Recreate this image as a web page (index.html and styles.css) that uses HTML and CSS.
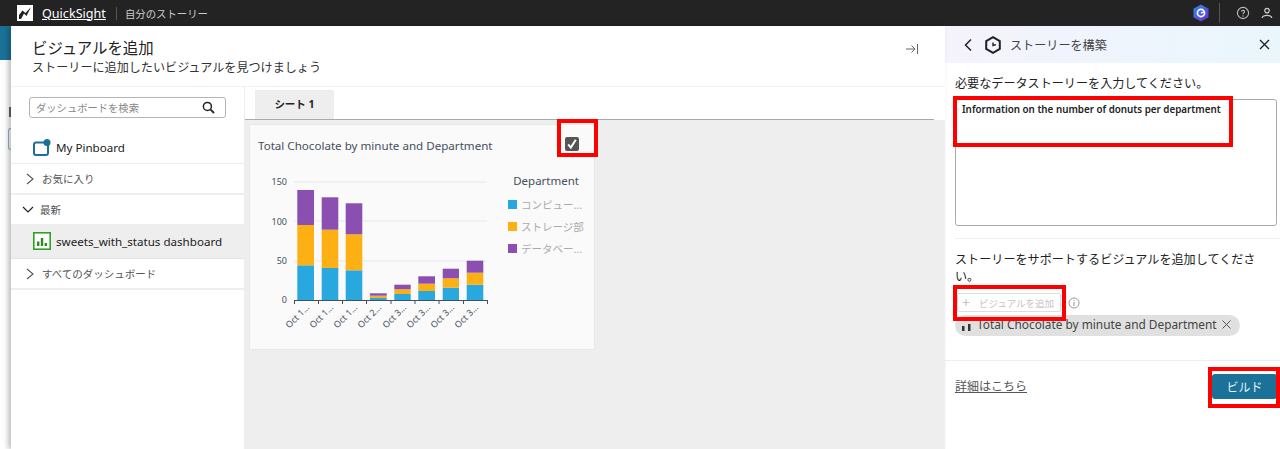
FILE: index.html
```html
<!DOCTYPE html>
<html lang="ja">
<head>
  <meta charset="UTF-8" />
  <title>QuickSight</title>
  <link rel="stylesheet" href="styles.css">
</head>
<body>

  <!-- Top bar -->
  <header class="topbar">
    <svg class="logo" width="16" height="16" viewBox="0 0 16 16"><rect width="16" height="16" fill="#fff"/><path d="M2 14V10L5.5 5.5 8.5 8 14 2 9.5 11 7 8.5 4 14Z" fill="#232323"/></svg>
    <a class="brand">QuickSight</a>
    <span class="topbar-sep"></span>
    <span class="topbar-title">自分のストーリー</span>
    <svg class="q-icon" width="16" height="18" viewBox="0 0 16 18">
      <defs><linearGradient id="qgrad" x1="0" y1="0" x2="1" y2="1"><stop offset="0" stop-color="#2f8cf0"/><stop offset="1" stop-color="#6a2fd0"/></linearGradient></defs>
      <path d="M8 .5 15.5 4.7V13.3L8 17.5.5 13.3V4.7Z" fill="url(#qgrad)"/>
      <circle cx="8" cy="9" r="3.6" fill="none" stroke="#fff" stroke-width="1.6"/><path d="M8 9 11 8" stroke="#fff" stroke-width="1.4"/>
    </svg>
    <span class="topbar-sep right-sep"></span>
    <svg class="top-icon" width="14" height="14" viewBox="0 0 14 14"><circle cx="7" cy="7" r="5.6" fill="none" stroke="#bbb" stroke-width="1.1"/><path d="M5.4 5.6C5.4 4 8.6 4 8.6 5.6 8.6 6.8 7 6.7 7 8.2" fill="none" stroke="#bbb" stroke-width="1.1"/><circle cx="7" cy="10" r=".7" fill="#bbb"/></svg>
    <svg class="top-icon user-icon" width="12" height="12" viewBox="0 0 12 12"><circle cx="6" cy="3.6" r="2.3" fill="none" stroke="#ccc" stroke-width="1.2"/><path d="M1.2 11C1.2 7.4 10.8 7.4 10.8 11" fill="none" stroke="#ccc" stroke-width="1.2"/></svg>
  </header>

  <div class="page">
    <!-- what is left visible of the page behind the dialog -->
    <div class="behind">
      <div class="behind-teal"></div>
      <div class="behind-mark"></div>
      <div class="behind-box"></div>
    </div>

    <!-- Add visual dialog -->
    <section class="dialog">
      <div class="dialog-head">
        <div>
          <h1>ビジュアルを追加</h1>
          <p>ストーリーに追加したいビジュアルを見つけましょう</p>
        </div>
        <svg class="collapse" width="14" height="12" viewBox="0 0 14 12"><path d="M1 6H10M6.5 2.5 10 6 6.5 9.5M12.5 1V11" fill="none" stroke="#666" stroke-width="1"/></svg>
      </div>
      <div class="dialog-body">
        <aside class="sidebar">
          <div class="search">
            <span>ダッシュボードを検索</span>
            <svg width="13" height="13" viewBox="0 0 13 13"><circle cx="5.4" cy="5.4" r="4" fill="none" stroke="#222" stroke-width="1.5"/><path d="M8.4 8.4 12 12" stroke="#222" stroke-width="1.8"/></svg>
          </div>
          <div class="pinboard">
            <svg width="18" height="18" viewBox="0 0 18 18"><rect x="1" y="3.5" width="14" height="12.5" rx="2" fill="none" stroke="#1b6f98" stroke-width="2"/><circle cx="14" cy="3.5" r="3.5" fill="#1b6f98"/></svg>
            <span>My Pinboard</span>
          </div>
          <div class="group">
            <svg class="chev" width="10" height="12" viewBox="0 0 10 12"><path d="M2 1 8 6 2 11" fill="none" stroke="#555" stroke-width="1.1"/></svg>
            <span>お気に入り</span>
          </div>
          <div class="group group-open">
            <svg class="chev" width="12" height="10" viewBox="0 0 12 10"><path d="M1 2 6 7 11 2" fill="none" stroke="#222" stroke-width="1.2"/></svg>
            <span>最新</span>
          </div>
          <div class="dash-item">
            <svg width="18" height="18" viewBox="0 0 18 18"><rect x=".8" y=".8" width="16.4" height="16.4" fill="#fff" stroke="#2ea31f" stroke-width="1.6"/><path d="M4 9.5H6.4V14H4ZM7.8 6H10.2V14H7.8ZM11.6 11H14V14H11.6Z" fill="#2e8a22"/></svg>
            <span>sweets_with_status dashboard</span>
          </div>
          <div class="group">
            <svg class="chev" width="10" height="12" viewBox="0 0 10 12"><path d="M2 1 8 6 2 11" fill="none" stroke="#555" stroke-width="1.1"/></svg>
            <span>すべてのダッシュボード</span>
          </div>
        </aside>

        <div class="sheet">
          <div class="tabs"><div class="tab">シート 1</div></div>
          <div class="sheet-area">
            <article class="card">
              <div class="card-head">
                <h2>Total Chocolate by minute and Department</h2>
                <span class="check">
                  <svg width="14" height="14" viewBox="0 0 14 14"><rect width="14" height="14" rx="2" fill="#555"/><path d="M3.2 7.4 5.8 10.6 10.8 2.8" fill="none" stroke="#fff" stroke-width="2"/></svg>
                </span>
              </div>
              <div class="chart-row">
                <svg class="chart" width="248" height="190" viewBox="0 0 248 190">
                  <g class="grid">
                    <path d="M44 38H237M44 77H237M44 117H237"/>
                  </g>
                  <g class="y-labels">
                    <text x="37" y="41">150</text>
                    <text x="37" y="81">100</text>
                    <text x="37" y="120">50</text>
                    <text x="37" y="159">0</text>
                  </g>
                  <g fill="#29a8e0">
                    <rect x="47.3" y="121.3" width="16.7" height="34.7"/>
                    <rect x="71.7" y="124" width="16.6" height="32"/>
                    <rect x="95.7" y="126.3" width="16.6" height="29.7"/>
                    <rect x="120" y="154" width="16.7" height="2"/>
                    <rect x="144.3" y="150" width="16.4" height="6"/>
                    <rect x="168.3" y="147" width="16.7" height="9"/>
                    <rect x="192.7" y="143.7" width="16.3" height="12.3"/>
                    <rect x="216.7" y="140.7" width="16.6" height="15.3"/>
                  </g>
                  <g fill="#fdb014">
                    <rect x="47.3" y="81" width="16.7" height="40.3"/>
                    <rect x="71.7" y="85.7" width="16.6" height="38.3"/>
                    <rect x="95.7" y="90.3" width="16.6" height="36"/>
                    <rect x="120" y="151.7" width="16.7" height="2.3"/>
                    <rect x="144.3" y="145.3" width="16.4" height="4.7"/>
                    <rect x="168.3" y="139.7" width="16.7" height="7.3"/>
                    <rect x="192.7" y="134.3" width="16.3" height="9.4"/>
                    <rect x="216.7" y="128.7" width="16.6" height="12"/>
                  </g>
                  <g fill="#8a4fb0">
                    <rect x="47.3" y="46" width="16.7" height="35"/>
                    <rect x="71.7" y="53.3" width="16.6" height="32.4"/>
                    <rect x="95.7" y="59.3" width="16.6" height="31"/>
                    <rect x="120" y="149.3" width="16.7" height="2.4"/>
                    <rect x="144.3" y="140.7" width="16.4" height="4.6"/>
                    <rect x="168.3" y="132.3" width="16.7" height="7.4"/>
                    <rect x="192.7" y="124.7" width="16.3" height="9.6"/>
                    <rect x="216.7" y="116.7" width="16.6" height="12"/>
                  </g>
                  <path class="axis" d="M44 156.5H238M44.5 156V160M68.5 156V160M92.5 156V160M116.5 156V160M141 156V160M165 156V160M189 156V160M213.5 156V160M237.5 156V160"/>
                  <g class="x-labels">
                    <text transform="translate(60 164) rotate(-45)">Oct 1...</text>
                    <text transform="translate(84 164) rotate(-45)">Oct 1...</text>
                    <text transform="translate(108 164) rotate(-45)">Oct 1...</text>
                    <text transform="translate(132 164) rotate(-45)">Oct 2...</text>
                    <text transform="translate(157 164) rotate(-45)">Oct 3...</text>
                    <text transform="translate(181 164) rotate(-45)">Oct 3...</text>
                    <text transform="translate(205 164) rotate(-45)">Oct 3...</text>
                    <text transform="translate(229 164) rotate(-45)">Oct 3...</text>
                  </g>
                </svg>
                <div class="legend">
                  <div class="legend-title">Department</div>
                  <div class="legend-item"><i class="sw-blue"></i>コンピュー...</div>
                  <div class="legend-item"><i class="sw-orange"></i>ストレージ部</div>
                  <div class="legend-item"><i class="sw-purple"></i>データベー...</div>
                </div>
              </div>
              <span class="mark mark-check"></span>
            </article>
          </div>
        </div>
      </div>
    </section>

    <!-- Build story panel -->
    <section class="panel">
      <div class="panel-head">
        <svg width="10" height="14" viewBox="0 0 10 14"><path d="M8 1.5 2.5 7 8 12.5" fill="none" stroke="#222" stroke-width="1.5"/></svg>
        <svg class="panel-q" width="16" height="18" viewBox="0 0 16 18"><path d="M8 1.2 14.8 5.1V12.9L8 16.8 1.2 12.9V5.1Z" fill="none" stroke="#222" stroke-width="2"/><path d="M8 6.5V9.5L11 8.6" fill="none" stroke="#222" stroke-width="1.4"/></svg>
        <span class="panel-title">ストーリーを構築</span>
        <svg class="panel-close" width="11" height="11" viewBox="0 0 11 11"><path d="M1 1 10 10M10 1 1 10" stroke="#222" stroke-width="1.4"/></svg>
      </div>
      <div class="prompt">
        <label>必要なデータストーリーを入力してください。</label>
        <div class="textbox">Information on the number of donuts per department</div>
        <span class="mark mark-text"></span>
      </div>
      <div class="visuals">
        <label>ストーリーをサポートするビジュアルを追加してください。</label>
        <div class="add-row">
          <button class="add-btn"><span class="plus">+</span>ビジュアルを追加</button>
          <svg width="12" height="12" viewBox="0 0 12 12"><circle cx="6" cy="6" r="5" fill="none" stroke="#999"/><path d="M6 5V9M6 3V4" stroke="#999"/></svg>
          <span class="mark mark-add"></span>
        </div>
        <div class="chip">
          <svg class="chip-icon" width="10" height="8" viewBox="0 0 10 8"><path d="M0 3H2.5V8H0ZM6 1H8.5V8H6Z" fill="#333"/></svg>
          <span>Total Chocolate by minute and Department</span>
          <svg width="9" height="9" viewBox="0 0 9 9"><path d="M.5.5 8.5 8.5M8.5.5 .5 8.5" stroke="#555" stroke-width="1"/></svg>
        </div>
      </div>
      <div class="panel-foot">
        <a class="more">詳細はこちら</a>
        <button class="build">ビルド</button>
        <span class="mark mark-build"></span>
      </div>
    </section>
  </div>

</body>
</html>
```

FILE: styles.css
```css
html, body {
  margin: 0;
  padding: 0;
}

body {
  width: 1280px;
  height: 449px;
  overflow: hidden;
  display: flex;
  flex-direction: column;
  font-family: "Noto Sans", "Noto Sans CJK JP", sans-serif;
  color: #222;
  background: #fff;
}

h1, h2, p {
  margin: 0;
  font-weight: 400;
}

/* Top bar */
.topbar {
  height: 26px;
  flex: none;
  display: flex;
  align-items: center;
  background: #232323;
  color: #ddd;
}

.logo {
  margin-left: 17px;
}

.brand {
  margin-left: 9px;
  font-size: 12.6px;
  color: #fff;
  text-decoration: underline;
}

.topbar-sep {
  width: 1px;
  height: 13px;
  margin-left: 10px;
  background: #555;
}

.topbar-title {
  margin-left: 8px;
  font-size: 10.4px;
  color: #ccc;
}

.q-icon {
  margin-left: auto;
}

.right-sep {
  height: 20px;
  margin-left: 10px;
}

.top-icon {
  margin-left: 16px;
}

.user-icon {
  margin-left: 11px;
  margin-right: 7px;
}

/* Page */
.page {
  flex: 1;
  display: flex;
  min-height: 0;
}

.behind {
  width: 11px;
  flex: none;
  background: #fff;
}

.behind-teal {
  height: 34px;
  background: #1b7299;
}

.behind-mark {
  width: 2px;
  height: 10px;
  margin: 47px 0 0 9px;
  background: #666;
}

.behind-box {
  width: 3px;
  height: 20px;
  margin: 11px 0 0 8px;
  border: 1px solid #8fb6c9;
  border-right: 0;
  border-radius: 3px 0 0 3px;
}

/* Dialog */
.dialog {
  width: 934px;
  flex: none;
  display: flex;
  flex-direction: column;
  background: #fff;
  box-shadow: -3px 0 5px rgba(0, 0, 0, 0.25);
  z-index: 1;
}

.dialog-head {
  height: 61px;
  flex: none;
  display: flex;
  justify-content: space-between;
  padding-left: 21px;
  box-sizing: border-box;
  border-bottom: 1px solid #f2f2f2;
}

.dialog-head h1 {
  margin-top: 11px;
  font-size: 15.4px;
  line-height: 23px;
}

.dialog-head p {
  font-size: 12.1px;
  line-height: 16px;
  color: #333;
}

.collapse {
  margin: 17px 26px 0 0;
}

.dialog-body {
  flex: 1;
  display: flex;
  min-height: 0;
}

/* Sidebar */
.sidebar {
  width: 234px;
  flex: none;
  box-sizing: border-box;
  border-right: 1px solid #eee;
}

.search {
  height: 19px;
  margin: 10px 18px 0 18px;
  padding: 0 10px 0 6px;
  display: flex;
  align-items: center;
  justify-content: space-between;
  border: 1px solid #b4b4b4;
  border-radius: 3px;
  font-size: 10.3px;
  color: #888;
}

.pinboard {
  height: 31px;
  margin-top: 14px;
  padding-left: 22px;
  display: flex;
  align-items: center;
  gap: 5px;
  font-size: 11.6px;
  color: #222;
  border-bottom: 1px solid #eee;
}

.group {
  height: 29px;
  padding-left: 14px;
  display: flex;
  align-items: center;
  gap: 7px;
  font-size: 10.5px;
  color: #555;
  border-bottom: 2px solid #eee;
}

.group-open {
  height: 29px;
  padding-left: 11px;
  border-bottom: 0;
  gap: 6px;
}

.dash-item {
  height: 34px;
  padding-left: 22px;
  display: flex;
  align-items: center;
  gap: 5px;
  font-size: 11.6px;
  background: #eee;
  border-bottom: 1px solid #e4e4e4;
}

/* Sheet */
.sheet {
  flex: 1;
  display: flex;
  flex-direction: column;
  min-width: 0;
}

.tabs {
  height: 33px;
  flex: none;
  box-sizing: border-box;
  margin-right: 11px;
  padding: 3px 0 0 10px;
  border-bottom: 1px solid #aaa;
}

.tab {
  width: 79px;
  height: 29px;
  background: #eee;
  text-align: center;
  font-size: 10.5px;
  font-weight: 700;
  line-height: 29px;
}

.sheet-area {
  flex: 1;
  padding: 5px 0 0 5px;
  background: #eee;
}

.card {
  position: relative;
  width: 344px;
  height: 224px;
  background: #fafafa;
  box-shadow: 0 0 1px rgba(0, 0, 0, 0.15);
}

.card-head {
  display: flex;
  justify-content: space-between;
  padding: 11px 15px 0 8px;
  height: 34px;
  box-sizing: border-box;
}

.card-head h2 {
  font-size: 11.6px;
  line-height: 20px;
  color: #44505e;
}

.check {
  display: block;
  margin-top: -2px;
  height: 14px;
}

.chart-row {
  display: flex;
}

.chart {
  width: 248px;
  flex: none;
  margin-top: -15px;
  overflow: visible;
}

.grid path {
  fill: none;
  stroke: #e8e8e8;
}

.y-labels text {
  font-size: 9px;
  fill: #44505e;
  text-anchor: end;
}

.axis {
  fill: none;
  stroke: #44505e;
}

.x-labels text {
  font-size: 9px;
  fill: #44505e;
  text-anchor: end;
}

.legend {
  margin: 0 0 0 10px;
}

.legend-title {
  font-size: 11.5px;
  line-height: 16px;
  color: #44505e;
  text-align: right;
  width: 71px;
  margin-top: 14px;
  margin-bottom: 4px;
}

.legend-item {
  display: flex;
  align-items: center;
  gap: 4px;
  height: 22px;
  font-size: 10.5px;
  color: #aaa;
  white-space: nowrap;
}

.legend-item i {
  width: 9px;
  height: 9px;
  flex: none;
}

.sw-blue { background: #29a8e0; }
.sw-orange { background: #fdb014; }
.sw-purple { background: #8a4fb0; }

/* Right panel */
.panel {
  width: 335px;
  flex: none;
  display: flex;
  flex-direction: column;
  background: #fff;
}

.panel-head {
  height: 37px;
  flex: none;
  display: flex;
  align-items: center;
  padding-left: 18px;
  background: linear-gradient(90deg, #f5f3fc, #e9f6fc);
}

.panel-q {
  margin-left: 12px;
}

.panel-title {
  margin-left: 9px;
  font-size: 12.1px;
  color: #444;
}

.panel-close {
  margin-left: auto;
  margin-right: 10px;
}

.prompt {
  position: relative;
  height: 176px;
  flex: none;
  box-sizing: border-box;
  margin-left: 10px;
  padding-top: 12px;
  border-bottom: 1px solid #eee;
}

.prompt label,
.visuals label {
  display: block;
  font-size: 12.1px;
  line-height: 17px;
  color: #222;
}

.textbox {
  width: 322px;
  height: 127px;
  margin-top: 7px;
  padding: 0 6px;
  box-sizing: border-box;
  border: 1px solid #aaa;
  border-radius: 3px;
  font-size: 9.8px;
  font-weight: 600;
  line-height: 19px;
}

.visuals {
  height: 121px;
  flex: none;
  box-sizing: border-box;
  padding: 12px 0 0 10px;
  width: 326px;
}

.visuals label {
  width: 312px;
}

.add-row {
  position: relative;
  display: flex;
  align-items: center;
  gap: 7px;
  margin-top: 8px;
  margin-left: 2px;
}

.add-btn {
  width: 104px;
  height: 19px;
  padding: 0 0 0 4px;
  display: flex;
  align-items: center;
  background: #fff;
  border: 1px solid #ddd;
  border-radius: 2px;
  font-family: inherit;
  font-size: 9.5px;
  color: #c4c4c4;
}

.plus {
  font-size: 14px;
  margin-right: 9px;
}

.chip {
  width: 285px;
  height: 21px;
  margin-top: 3px;
  box-sizing: border-box;
  display: flex;
  align-items: center;
  gap: 5px;
  padding: 0 0 3px 7px;
  background: #e0e0e0;
  border-radius: 11px;
  font-size: 11.85px;
  color: #444;
  white-space: nowrap;
}

.chip-icon {
  margin-top: 6px;
}

.panel-foot {
  position: relative;
  flex: 1;
  display: flex;
  justify-content: space-between;
  align-items: flex-start;
  padding: 13px 3px 0 10px;
  border-top: 1px solid #eee;
}

.more {
  margin-top: 4px;
  font-size: 12px;
  line-height: 18px;
  color: #555;
  text-decoration: underline;
}

.build {
  width: 65px;
  height: 25px;
  padding: 0;
  border: 0;
  border-radius: 3px;
  background: #1b7299;
  color: #e6eff4;
  font-family: inherit;
  font-size: 12px;
}

/* Red callouts painted over the screenshot */
.mark {
  position: absolute;
  box-sizing: border-box;
  border: 4px solid #f00;
  pointer-events: none;
}

.mark-check {
  left: 307px;
  top: -6px;
  width: 41px;
  height: 38px;
}

.mark-text {
  left: -2px;
  top: 33px;
  width: 280px;
  height: 51px;
}

.mark-add {
  left: -4px;
  top: -8px;
  width: 113px;
  height: 36px;
}

.mark-build {
  left: 263px;
  top: 6px;
  width: 72px;
  height: 41px;
}
```
